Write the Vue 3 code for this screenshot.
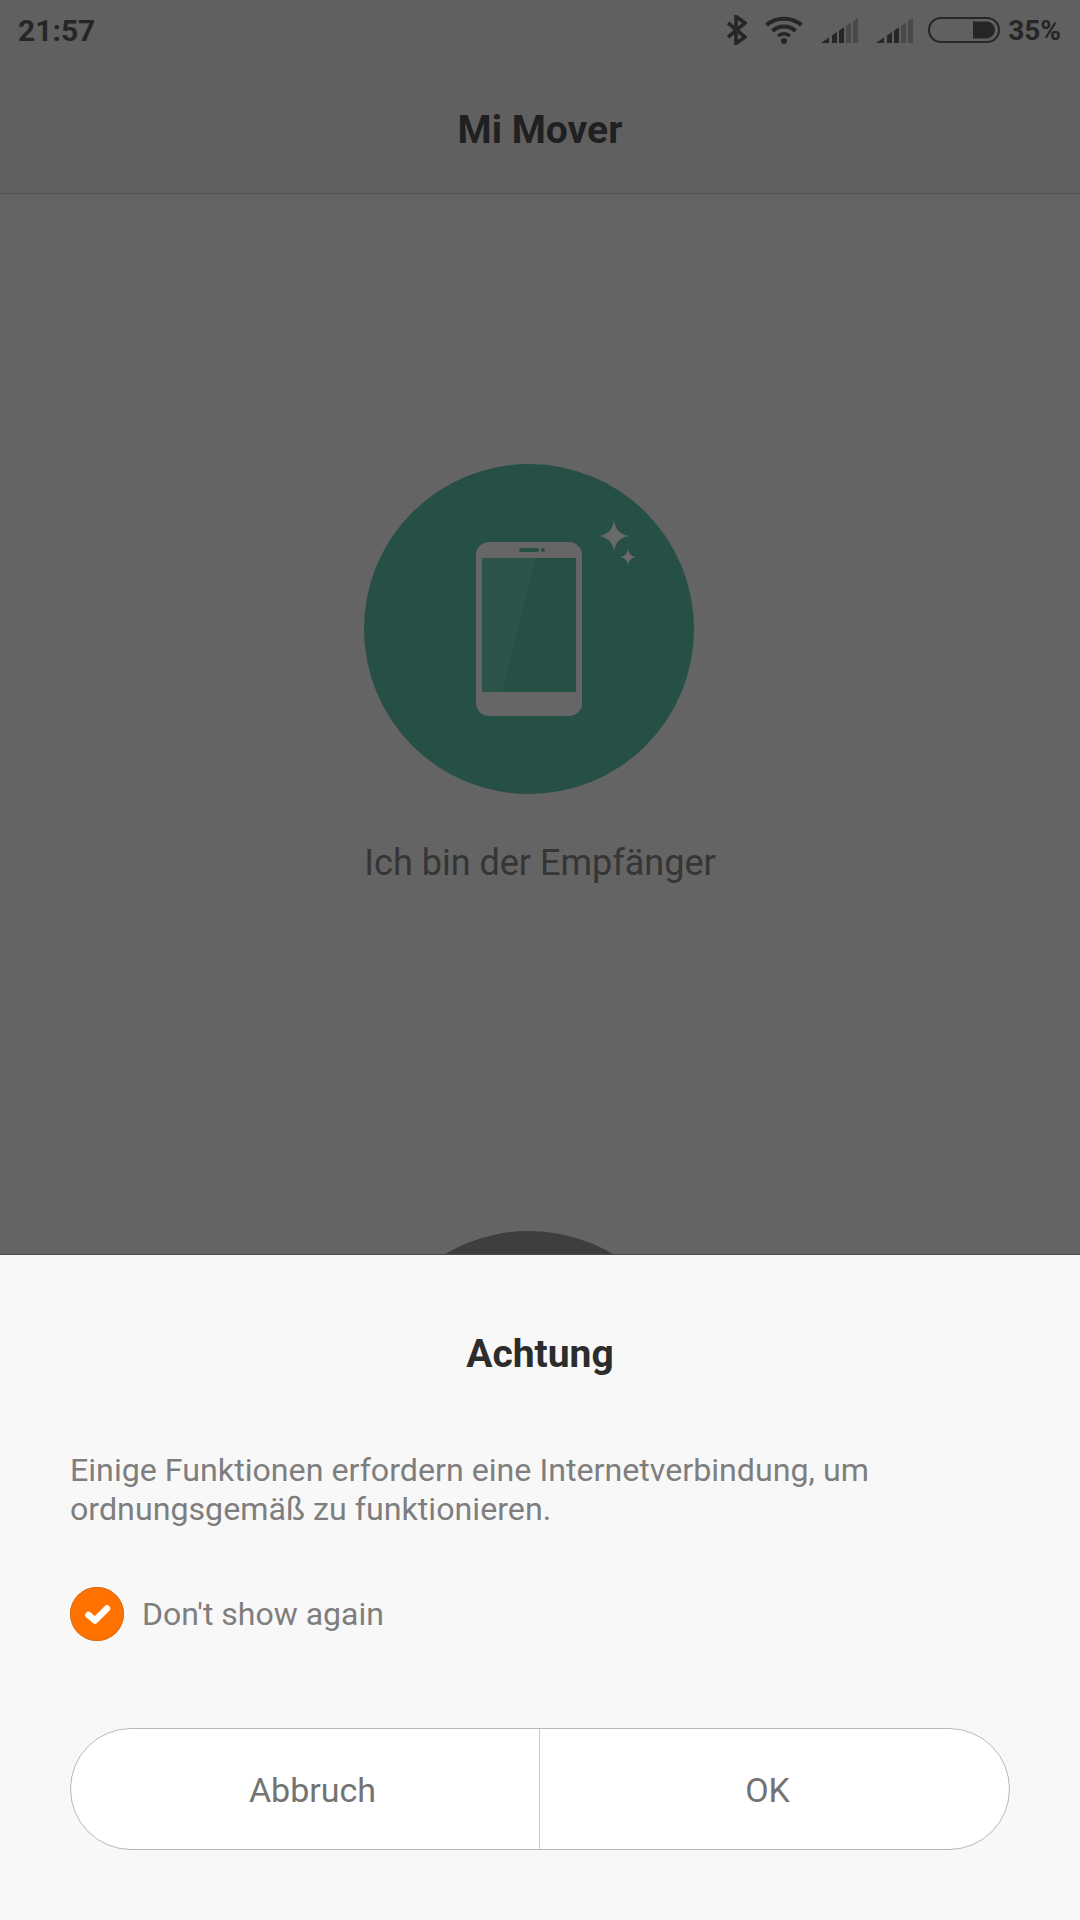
<script setup>
// Each signal icon rises along a line; the last two bars are the unused ones.
const slopeTop = (x) => 26 - x * 0.68
const spans = [[0, 8], [11, 16], [18, 23], [25, 30], [32, 37]]
const bars = spans.map(([a, b], i) => ({
  points: `${a},26 ${a},${slopeTop(a)} ${b},${slopeTop(b)} ${b},26`,
  fill: i < 3 ? '#262626' : '#494949',
}))
const signalIcons = ['sim1', 'sim2']
</script>

<template>
  <div class="page">
    <header class="top">
      <div class="status">
        <span class="time">21:57</span>
        <div class="indicators">
          <svg class="ic-bt" width="20" height="30" viewBox="0 0 20 30">
            <path d="M1 8 L18 22 L9 28.500 V1.500 L18 8 L1 22" fill="none" stroke="#262626" stroke-width="3.600" />
          </svg>
          <svg class="ic-wifi" width="38" height="28" viewBox="0 0 38 28">
            <path d="M1.500 9 C11 0.500 27 0.500 36.500 9" fill="none" stroke="#262626" stroke-width="4" />
            <path d="M7.500 15 C14 9 24 9 30.500 15" fill="none" stroke="#262626" stroke-width="4" />
            <path d="M13 20 C16.500 17 21.500 17 25 20" fill="none" stroke="#262626" stroke-width="3.600" />
            <circle cx="19" cy="25" r="3" fill="#262626" />
          </svg>
          <svg v-for="icon in signalIcons" :key="icon" class="ic-sig" width="37" height="26" viewBox="0 0 37 26">
            <polygon v-for="bar in bars" :key="bar.points" :points="bar.points" :fill="bar.fill" />
          </svg>
          <svg class="ic-batt" width="72" height="26" viewBox="0 0 72 26">
            <rect x="1" y="1" width="70" height="24" rx="12" fill="none" stroke="#262626" stroke-width="2" />
            <path d="M45 4.500 H58.500 a8.500 8.500 0 0 1 0 17 H45 Z" fill="#262626" />
          </svg>
          <span class="pct">35%</span>
        </div>
      </div>
      <h1 class="title">Mi Mover</h1>
    </header>

    <main class="body">
      <div class="circle">
        <svg width="330" height="330" viewBox="0 0 330 330">
          <rect x="112" y="78" width="106" height="174" rx="13" fill="#666666" />
          <rect x="118" y="94" width="94" height="134" fill="#265045" />
          <path d="M118 94 H172 L138 228 H118 Z" fill="#2d544a" />
          <rect x="155" y="84" width="20" height="4" rx="2" fill="#265045" />
          <circle cx="179" cy="86" r="2" fill="#265045" />
          <path d="M250 56 Q251.500 70.500 266 72 Q251.500 73.500 250 88 Q248.500 73.500 234 72 Q248.500 70.500 250 56 Z" fill="#6a6a6a" />
          <path d="M264 85 Q265 92 272 93 Q265 94 264 101 Q263 94 256 93 Q263 92 264 85 Z" fill="#6a6a6a" />
        </svg>
      </div>
      <p class="role">Ich bin der Empfänger</p>
      <div class="second"></div>
    </main>

    <section class="sheet">
      <h2 class="sheet-title">Achtung</h2>
      <p class="msg">Einige Funktionen erfordern eine Internetverbindung, um ordnungsgemäß zu funktionieren.</p>
      <label class="check">
        <span class="tick">
          <svg width="54" height="54" viewBox="0 0 54 54">
            <path d="M18.500 28 L25 33.500 L37 21.500" fill="none" stroke="#ffffff" stroke-width="6.500" stroke-linecap="round" stroke-linejoin="round" />
          </svg>
        </span>
        <span class="check-label">Don't show again</span>
      </label>
      <div class="actions">
        <button class="btn btn-l">Abbruch</button>
        <button class="btn btn-r">OK</button>
      </div>
    </section>
  </div>
</template>

<style scoped>
.page {
  position: relative;
  width: 1080px;
  height: 1920px;
  overflow: hidden;
  background: #646464;
  font-family: Roboto, "Liberation Sans", sans-serif;
}
.top {
  height: 194px;
  box-sizing: border-box;
  background: #606060;
  border-bottom: 1px solid #505050;
}
.status {
  height: 60px;
  display: flex;
  align-items: center;
  justify-content: space-between;
  padding: 0 19px 0 18px;
}
.time {
  font-size: 30px;
  font-weight: 700;
  color: #262626;
}
.pct {
  font-size: 28px;
  font-weight: 700;
  color: #262626;
}
.indicators {
  display: flex;
  align-items: center;
}
.ic-bt { margin-right: 18px; }
.ic-wifi { margin-right: 18px; }
.ic-sig { margin-right: 18px; }
.ic-sig + .ic-sig { margin-right: 15px; }
.ic-batt { margin-right: 8px; }
.title {
  margin: 46px 0 0;
  text-align: center;
  font-size: 39px;
  line-height: 48px;
  font-weight: 700;
  color: #202020;
}
.body {
  display: flex;
  flex-direction: column;
  align-items: center;
}
.circle {
  width: 330px;
  height: 330px;
  margin-top: 270px;
  margin-left: -22px;
  border-radius: 50%;
  background: #265045;
}
.circle svg { display: block; }
.role {
  margin: 47px 0 0;
  font-size: 36px;
  line-height: 44px;
  color: #353535;
}
.second {
  width: 330px;
  height: 330px;
  margin-top: 346px;
  margin-left: -22px;
  border-radius: 50%;
  background: #3e3e3e;
}
.sheet {
  position: absolute;
  left: 0;
  right: 0;
  top: 1255px;
  bottom: 0;
  box-sizing: border-box;
  padding: 0 70px;
  background: #f8f8f8;
  box-shadow: 0 -1px 0 #4c4c4c;
}
.sheet-title {
  margin: 0;
  padding-top: 75px;
  text-align: center;
  font-size: 39px;
  line-height: 48px;
  font-weight: 700;
  color: #2c2c2c;
}
.msg {
  margin: 73px 0 0;
  font-size: 32.200px;
  line-height: 39px;
  color: #7e7e7e;
}
.check {
  display: flex;
  align-items: center;
  margin-top: 58px;
}
.tick {
  width: 54px;
  height: 54px;
  border-radius: 50%;
  background: #ff7200;
  box-shadow: inset 0 0 0 1px #df6a10;
}
.tick svg { display: block; }
.check-label {
  margin-left: 18px;
  font-size: 32px;
  color: #7e7e7e;
}
.actions {
  display: flex;
  margin-top: 87px;
  height: 122px;
  box-sizing: border-box;
  border: 1px solid #b8b8b8;
  border-radius: 61px;
  background: #ffffff;
  overflow: hidden;
}
.btn {
  flex: 0 0 50%;
  box-sizing: border-box;
  border: 0;
  background: transparent;
  font-family: inherit;
  font-size: 34px;
  color: #737373;
}
.btn-l {
  padding: 2px 0 0 15px;
  border-right: 1px solid #c8c8c8;
}
.btn-r { padding: 2px 14px 0 0; }
</style>
